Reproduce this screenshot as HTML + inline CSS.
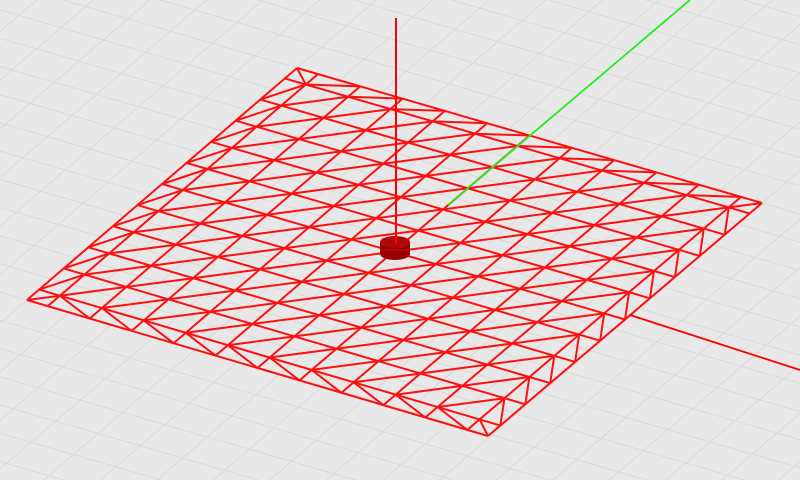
<!DOCTYPE html>
<html><head><style>html,body{margin:0;padding:0;background:#e8e8e8;overflow:hidden;width:800px;height:480px}svg{display:block;position:absolute;left:0;top:0}script{display:none}</style></head>
<body>
<svg id="s" width="800" height="480" xmlns="http://www.w3.org/2000/svg">
<rect width="800" height="480" fill="#e8e8e8"/>
<g id="grid" stroke="#d9d9d9" stroke-width="1"></g>
<g id="mesh" stroke="#ff1010" stroke-width="2" fill="none"></g>
<line x1="396" y1="18" x2="396" y2="240" stroke="#ff0000" stroke-width="2"/>
<line x1="448" y1="205" x2="690" y2="0" stroke="#22ee22" stroke-width="1.8"/>
<line x1="630" y1="315" x2="800" y2="370" stroke="#ff0000" stroke-width="1.8"/>
<path d="M380 242 L380 254 A15 6 0 0 0 410 254 L410 242 Z" fill="#9a0000"/>
<line x1="380" y1="250" x2="410" y2="250" stroke="#c01010" stroke-width="1"/>
<ellipse cx="395" cy="242" rx="15" ry="6" fill="#b00808"/>
<line x1="396" y1="236" x2="396" y2="244" stroke="#ff0000" stroke-width="2"/>
</svg>
<script>
var T=[297,68],R=[762,203],B=[488,436],L=[27,300],N=10,e0=0.045;
function P(a,b){var x=(1-a)*(1-b)*T[0]+a*(1-b)*R[0]+a*b*B[0]+(1-a)*b*L[0];
var y=(1-a)*(1-b)*T[1]+a*(1-b)*R[1]+a*b*B[1]+(1-a)*b*L[1];return [x,y];}
function ln(g,p,q){var e=document.createElementNS("http://www.w3.org/2000/svg","line");
e.setAttribute("x1",p[0].toFixed(1));e.setAttribute("y1",p[1].toFixed(1));e.setAttribute("x2",q[0].toFixed(1));e.setAttribute("y2",q[1].toFixed(1));g.appendChild(e);}
var g=document.getElementById("grid"),m=document.getElementById("mesh");
var GT=[297,68],u=[(762-297)/11,(203-68)/11],v=[(27-297)/11,(300-68)/11];
function A(i,j){return [GT[0]+i*u[0]+j*v[0],GT[1]+i*u[1]+j*v[1]];}
for(var i=-30;i<=40;i++){ln(g,A(i,-30),A(i,40));ln(g,A(-30,i),A(40,i));}
function Q(i,j){return P(e0+(1-2*e0)*i/N,e0+(1-2*e0)*j/N);}
for(var k=0;k<=N;k++){ln(m,Q(k,0),Q(k,N));ln(m,Q(0,k),Q(N,k));}
for(var i=0;i<N;i++)for(var j=0;j<N;j++){ln(m,Q(i,j+1),Q(i+1,j));}
ln(m,P(0,0),P(1,0));ln(m,P(1,0),P(1,1));ln(m,P(1,1),P(0,1));ln(m,P(0,1),P(0,0));
for(var k=0;k<=N;k++){var t=e0+(1-2*e0)*k/N;
 ln(m,Q(k,0),P(t,0));ln(m,Q(k,N),P(t,1));ln(m,Q(0,k),P(0,t));ln(m,Q(N,k),P(1,t));
 if(k<N){var t2=e0+(1-2*e0)*(k+1)/N;
  ln(m,Q(k,0),P(t2,0));ln(m,Q(k,N),P(t2,1));ln(m,Q(0,k),P(0,t2));ln(m,Q(N,k),P(1,t2));}}
ln(m,Q(0,0),P(0,0));ln(m,Q(N,0),P(1,0));ln(m,Q(N,N),P(1,1));ln(m,Q(0,N),P(0,1));
</script>
</body></html>
